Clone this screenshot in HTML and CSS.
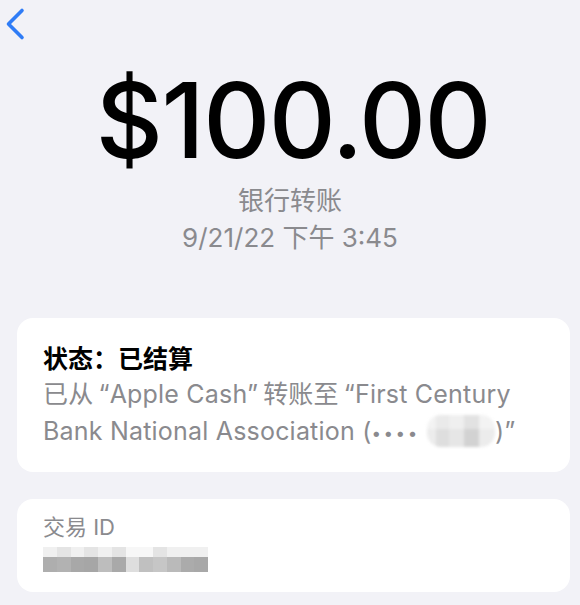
FILE: index.html
```html
<!DOCTYPE html>
<html lang="zh-CN">
<head>
<meta charset="utf-8">
<title>银行转账</title>
<link rel="stylesheet" href="styles.css">
</head>
<body>
<div class="screen">
  <div class="nav">
    <svg class="back" width="30" height="48" viewBox="0 0 30 48"><path d="M22 10.5 L8.5 24 L22 37.5" fill="none" stroke="#2f7cf6" stroke-width="3.6" stroke-linecap="round" stroke-linejoin="round"/></svg>
  </div>
  <div class="hero">
    <div class="amount">$100.00</div>
    <div class="kind">银行转账</div>
    <div class="date">9/21/22 下午 3:45</div>
  </div>
  <div class="card status">
    <div class="title">状态：已结算</div>
    <div class="desc">已从<span class="ql">“</span>Apple Cash<span class="qr">”</span>转账至<span class="ql">“</span>First Century Bank National Association (<span class="dots">••••</span> <span class="mask"></span>)”</div>
  </div>
  <div class="card txn">
    <div class="label">交易 ID</div>
    <div class="pix">
      <span></span><span></span><span></span><span></span><span></span><span></span><span></span><span></span><span></span><span></span><span></span><span></span>
      <span></span><span></span><span></span><span></span><span></span><span></span><span></span><span></span><span></span><span></span><span></span><span></span>
    </div>
  </div>
</div>
</body>
</html>
```

FILE: styles.css
```css
html, body {
  margin: 0;
  padding: 0;
  background: #f2f2f7;
}
body {
  font-family: Inter, "Noto Sans CJK SC", sans-serif;
  color: #000;
  width: 580px;
  height: 605px;
  overflow: hidden;
}
.screen {
  display: flex;
  flex-direction: column;
}
.nav {
  height: 48px;
}
.back { display: block; }
.hero {
  display: flex;
  flex-direction: column;
  align-items: center;
}
.amount {
  font-size: 104px;
  font-weight: 500;
  letter-spacing: -1.5px;
  line-height: 130px;
  margin-top: 7px;
  padding-left: 6px;
}
.kind, .date {
  font-size: 26px;
  color: #8a8a8e;
  line-height: 37px;
}
.kind { margin-top: -3px; }
.card {
  background: #fff;
  border-radius: 16px;
  margin: 0 10px 0 17px;
  padding: 0 26px;
}
.status {
  margin-top: 62px;
  padding-top: 23px;
  padding-bottom: 20px;
}
.title {
  font-size: 25px;
  font-weight: 700;
  line-height: 36px;
}
.desc {
  font-size: 25px;
  color: #8a8a8e;
  line-height: 37px;
  margin-top: -1px;
  letter-spacing: 0.2px;
}
.ql { margin-left: 5px; }
.qr { margin-right: 5px; }
.dots {
  font-size: 17px;
  letter-spacing: 2.5px;
  vertical-align: 1px;
}
.mask {
  display: inline-block;
  width: 68px;
  height: 32px;
  vertical-align: -7px;
  border-radius: 14px;
  background:
    linear-gradient(180deg, rgba(255,255,255,0.35) 0 45%, rgba(255,255,255,0) 45%),
    linear-gradient(90deg, #ececec 0 13%, #dedede 13% 32%, #e6e6e6 32% 54%, #d2d2d2 54% 76%, #ececec 76%);
  filter: blur(1.5px);
}
.txn {
  margin-top: 27px;
  padding-top: 12px;
  padding-bottom: 20px;
}
.label {
  font-size: 22px;
  color: #8a8a8e;
  line-height: 32px;
}
.pix {
  display: grid;
  grid-template-columns: repeat(12, 13.75px);
  grid-template-rows: 10px 15px;
  margin-top: 4px;
}
.pix span:nth-child(-n+12) { background: #f0f0f0; }
.pix span:nth-child(2), .pix span:nth-child(4), .pix span:nth-child(6), .pix span:nth-child(9) { background: #e4e4e4; }
.pix span:nth-child(7), .pix span:nth-child(8) { background: #f7f7f7; }
.pix span:nth-child(13) { background: #aeaeae; }
.pix span:nth-child(14) { background: #b2b2b2; }
.pix span:nth-child(15) { background: #a8a8a8; }
.pix span:nth-child(16) { background: #a6a6a6; }
.pix span:nth-child(17) { background: #bdbdbd; }
.pix span:nth-child(18) { background: #a9a9a9; }
.pix span:nth-child(19) { background: #dedede; }
.pix span:nth-child(20) { background: #c0c0c0; }
.pix span:nth-child(21) { background: #c6c6c6; }
.pix span:nth-child(22) { background: #bababa; }
.pix span:nth-child(23) { background: #ababab; }
.pix span:nth-child(24) { background: #a8a8a8; }
```
